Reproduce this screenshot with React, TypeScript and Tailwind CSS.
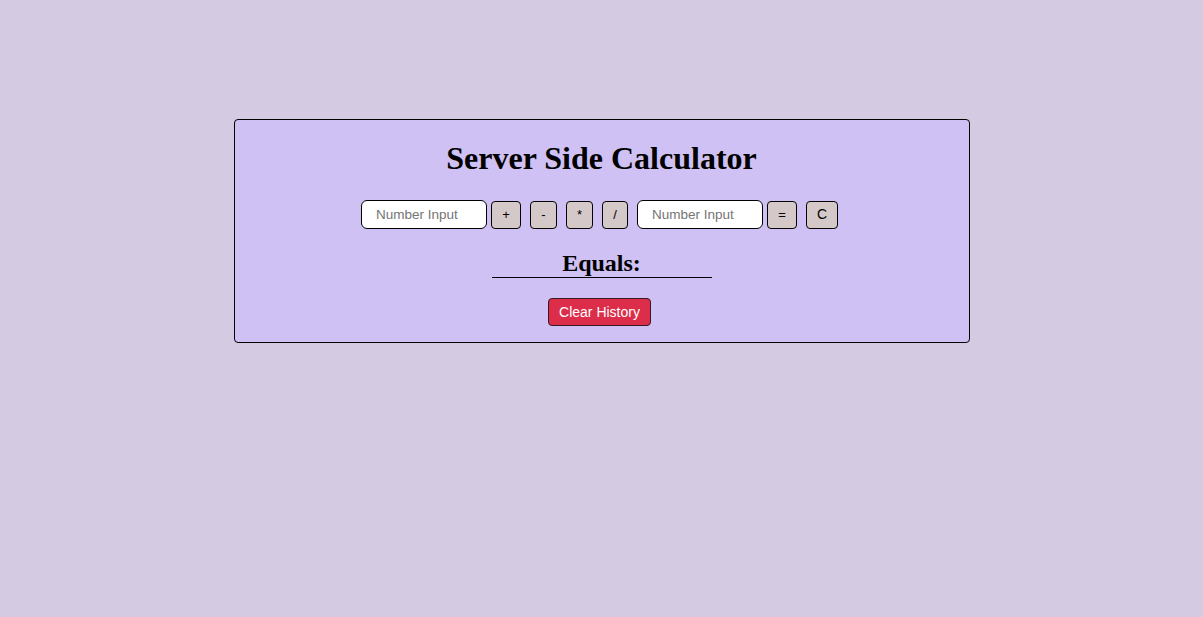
export default function App() {
  return (
    <div className="min-h-screen w-full bg-[#d4cae1] pt-[119px]" style={{ fontFamily: '"Liberation Sans", Arial, sans-serif' }}>
      <div className="mx-auto flex w-[736px] flex-col items-center rounded-[4px] border border-black bg-[#cfc1f3] pt-[20px] pb-[16px]">
        <h1 className="font-['Liberation_Serif',serif] text-[32px] font-bold leading-[37px] text-black">
          Server Side Calculator
        </h1>
        <div className="mt-[23px] flex items-center pr-[4px]">
          <input
            className="h-[29px] w-[126px] rounded-[6px] border border-black bg-white px-[14px] text-[13.5px] placeholder:text-[#757575] outline-none"
            placeholder="Number Input"
          />
          <button className="ml-[4px] h-[28px] w-[30px] rounded-[4px] border border-black bg-[#d4c8c8] text-[13px]">+</button>
          <button className="ml-[9px] h-[28px] w-[27px] rounded-[4px] border border-black bg-[#d4c8c8] text-[13px]">-</button>
          <button className="ml-[9px] h-[28px] w-[27px] rounded-[4px] border border-black bg-[#d4c8c8] text-[13px]">*</button>
          <button className="ml-[9px] h-[28px] w-[26px] rounded-[4px] border border-black bg-[#d4c8c8] text-[13px]">/</button>
          <input
            className="ml-[9px] h-[29px] w-[126px] rounded-[6px] border border-black bg-white px-[14px] text-[13.5px] placeholder:text-[#757575] outline-none"
            placeholder="Number Input"
          />
          <button className="ml-[4px] h-[28px] w-[30px] rounded-[4px] border border-black bg-[#d4c8c8] text-[13px]">=</button>
          <button className="ml-[9px] h-[28px] w-[32px] rounded-[4px] border border-black bg-[#d4c8c8] text-[14px]">C</button>
        </div>
        <h2 className="mt-[20px] w-[220px] border-b border-black text-center font-['Liberation_Serif',serif] text-[24px] font-bold leading-[28px] text-black">
          Equals:
        </h2>
        <button className="mt-[20px] mr-[4px] h-[28px] w-[103px] rounded-[4px] border border-[#3a1a22] bg-[#dc2e4a] text-[14px] text-white">
          Clear History
        </button>
      </div>
    </div>
  );
}
